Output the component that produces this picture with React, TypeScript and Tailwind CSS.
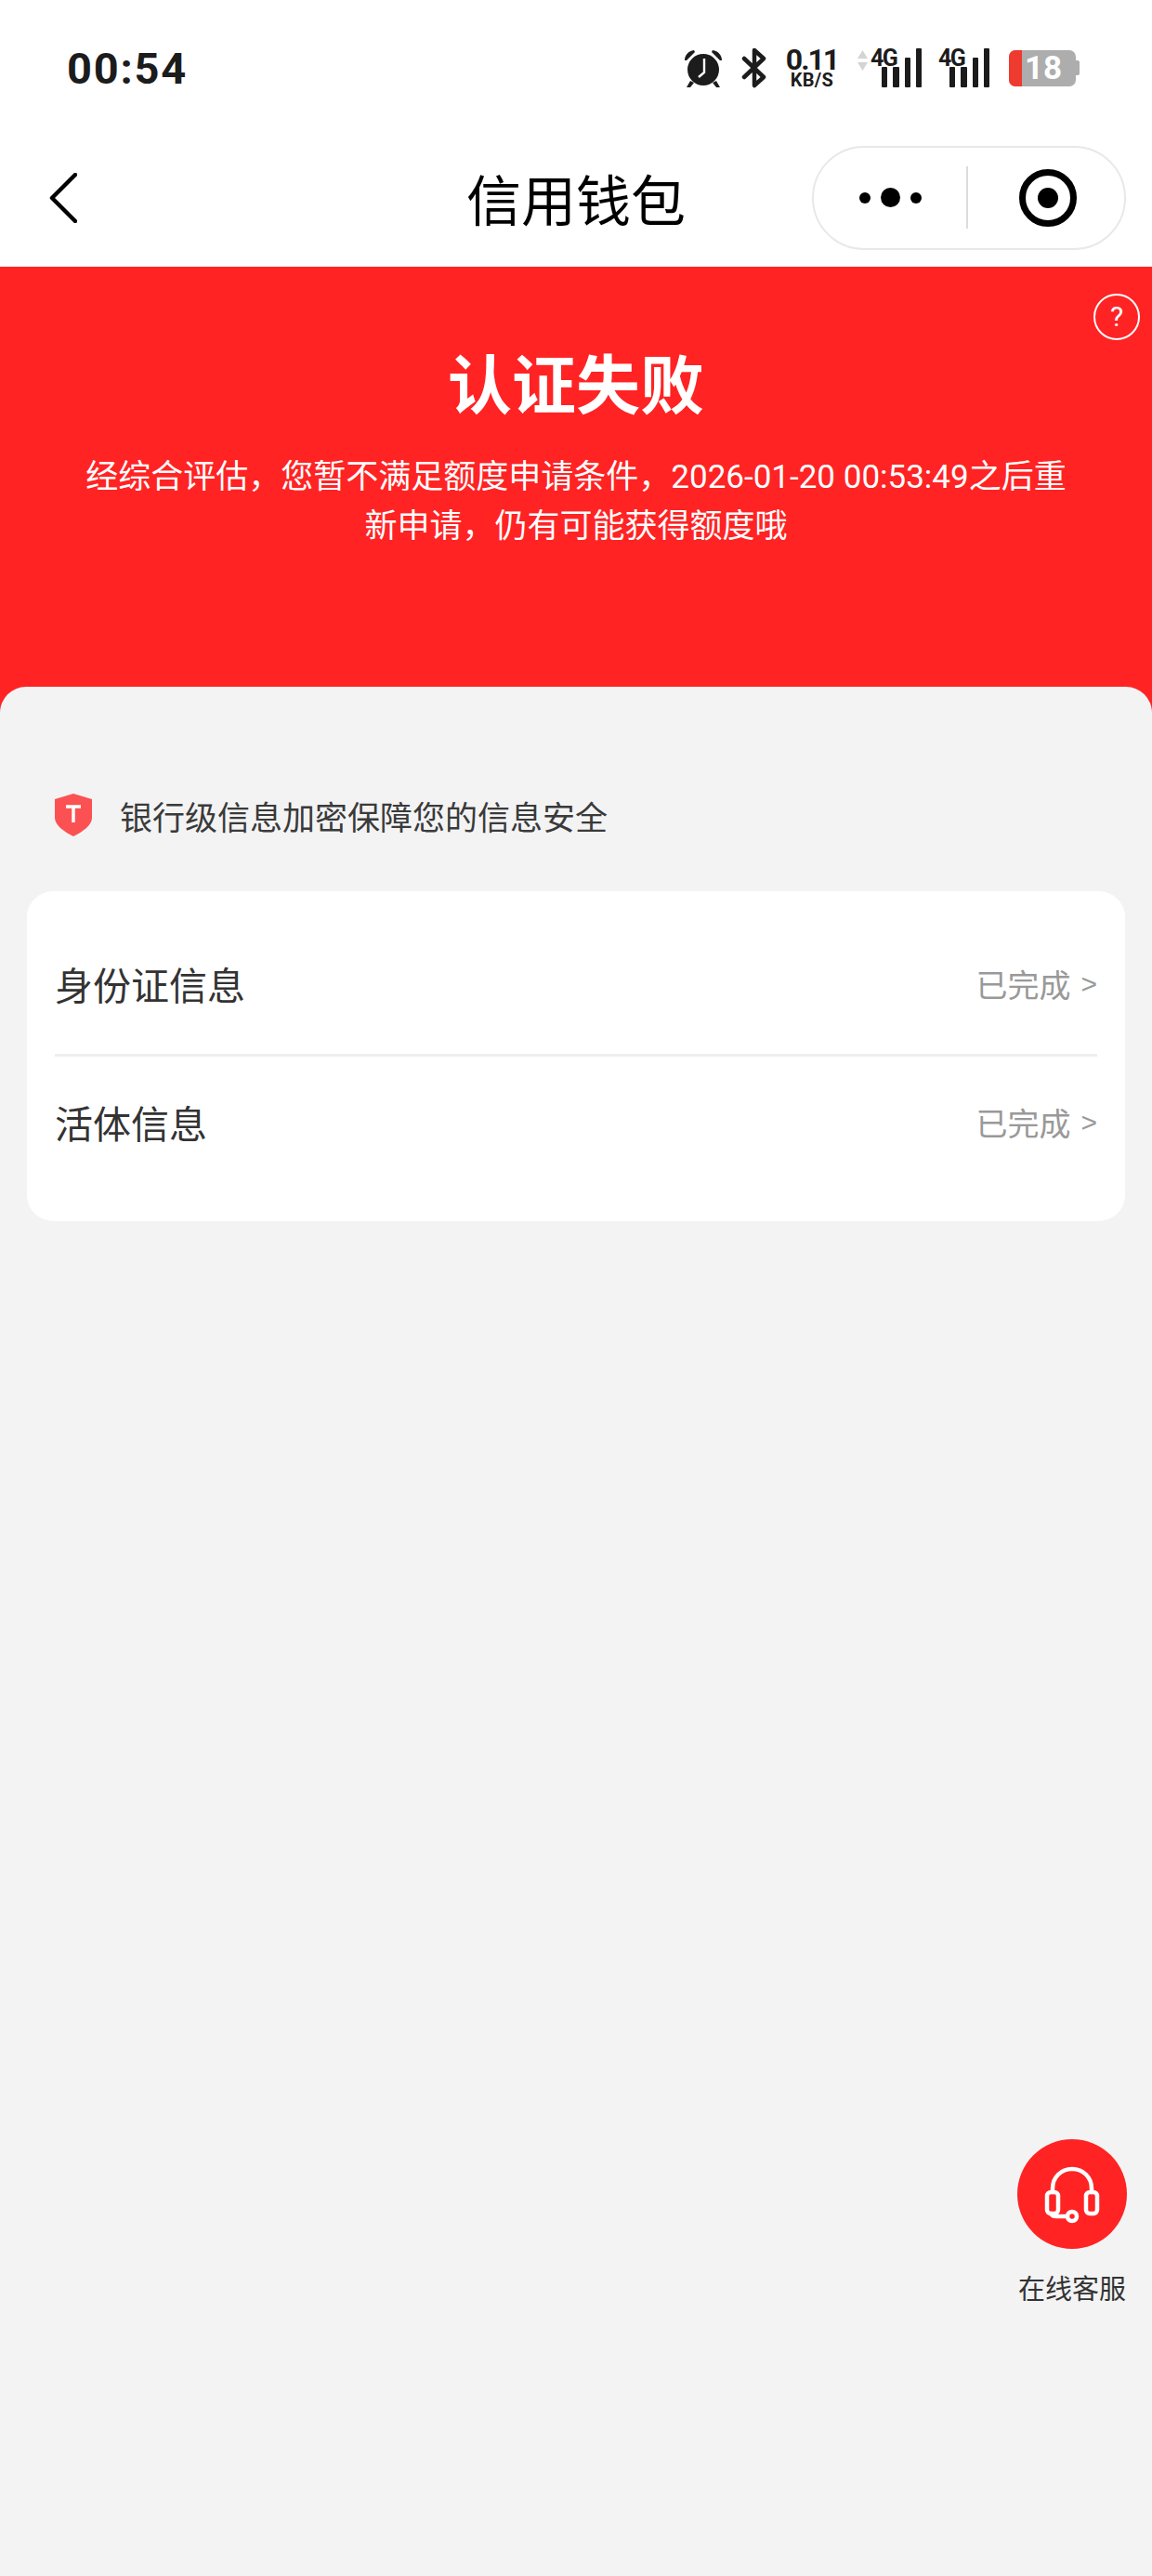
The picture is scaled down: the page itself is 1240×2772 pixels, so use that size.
const cjk = "font-['Noto_Sans_CJK_SC','Noto_Sans',sans-serif]";

function AlarmIcon() {
  return (
    <svg width="44" height="44" viewBox="0 0 44 44" fill="#1c1c1c">
      <circle cx="22" cy="24" r="17" />
      <path d="M2 14c0-6 4-10 10-11l1 2-9 9zM42 14c0-6-4-10-10-11l-1 2 9 9z" />
      <path d="M8 36l-4 7h4l4-5zM36 36l4 7h-4l-4-5z" />
      <path d="M23 12v15l-6 5" fill="none" stroke="#fff" strokeWidth="2.4" />
    </svg>
  );
}

function BluetoothIcon() {
  return (
    <svg width="28" height="44" viewBox="0 0 28 44" fill="none" stroke="#1c1c1c" strokeWidth="4.5">
      <path d="M3 12l21 20-10 9V3l10 9L3 32" strokeLinejoin="round" strokeLinecap="round" />
    </svg>
  );
}

function SignalBars() {
  return (
    <div className="flex items-end gap-[6px]">
      <div className="w-[6px] h-[22px] rounded-[1px] bg-[#1c1c1c]" />
      <div className="w-[7px] h-[22px] rounded-[1px] bg-[#1c1c1c]" />
      <div className="w-[6px] h-[32px] rounded-[1px] bg-[#1c1c1c]" />
      <div className="w-[6px] h-[42px] rounded-[1px] bg-[#1c1c1c]" />
    </div>
  );
}

function Signal({ arrows }: { arrows?: boolean }) {
  return (
    <div className="flex items-start h-[44px]">
      {arrows && (
        <svg width="11" height="24" viewBox="0 0 11 24" fill="#d4d4d4" className="mr-[3px] mt-[2px]">
          <path d="M5.5 1L11 10H0zM5.5 23L0 14h11z" />
        </svg>
      )}
      <span className="font-['Roboto',sans-serif] font-bold text-[25px] leading-[24px] tracking-[-1.5px] text-[#1c1c1c] w-[27px]">
        4G
      </span>
      <div className="-ml-[15px] mt-[1px]">
        <SignalBars />
      </div>
    </div>
  );
}

function Battery() {
  return (
    <div className="flex items-center">
      <div className="w-[72px] h-[39px] rounded-[7px] bg-[#adadad] flex">
        <div className="w-[14px] rounded-l-[7px] bg-[#ee3a2f]" />
        <span className="pl-[3px] font-['Roboto',sans-serif] font-bold text-[35px] leading-[39px] text-white">18</span>
      </div>
      <div className="w-[4px] h-[16px] rounded-r-[2px] bg-[#adadad]" />
    </div>
  );
}

function StatusBar() {
  return (
    <div className="h-[146px] flex items-center justify-between pl-[72px] pr-[78px]">
      <span className="font-['Roboto',sans-serif] font-bold text-[47px] leading-none tracking-[1.8px] text-[#1c1c1c]">00:54</span>
      <div className="flex items-center">
        <AlarmIcon />
        <div className="ml-[19px]">
          <BluetoothIcon />
        </div>
        <div className="ml-[21px] w-[54px] flex flex-col items-center font-['Roboto',sans-serif] font-bold text-[#1c1c1c]">
          <span className="text-[32px] leading-[27px] tracking-[-2px]">0.11</span>
          <span className="text-[20px] leading-[17px] tracking-[0.3px]">KB/S</span>
        </div>
        <div className="ml-[22px]">
          <Signal arrows />
        </div>
        <div className="ml-[18px]">
          <Signal />
        </div>
        <div className="ml-[21px]">
          <Battery />
        </div>
      </div>
    </div>
  );
}

function NavBar() {
  return (
    <div className="h-[141px] pb-[8px] grid grid-cols-[1fr_auto_1fr] items-center">
      <div className="pl-[53px]">
        <svg width="30" height="54" viewBox="0 0 30 54" fill="none" stroke="#000" strokeWidth="4.5">
          <path d="M28 2L3 27l25 25" strokeLinecap="round" strokeLinejoin="round" />
        </svg>
      </div>
      <h1 className={`${cjk} text-[59px] leading-none font-normal text-black`}>信用钱包</h1>
      <div className="flex justify-end pr-[28px]">
        <div className="w-[338px] h-[112px] rounded-full border-2 border-[#e8e8e8] bg-white flex items-center">
          <div className="w-[164px] flex items-center justify-center gap-[11px]">
            <div className="w-[12px] h-[12px] rounded-full bg-black" />
            <div className="w-[21px] h-[21px] rounded-full bg-black" />
            <div className="w-[12px] h-[12px] rounded-full bg-black" />
          </div>
          <div className="w-[2px] h-[67px] bg-[#dcdcdc]" />
          <div className="flex-1 flex items-center justify-center pl-[4px]">
            <div className="w-[62px] h-[62px] rounded-full border-[7px] border-black flex items-center justify-center">
              <div className="w-[22px] h-[22px] rounded-full bg-black" />
            </div>
          </div>
        </div>
      </div>
    </div>
  );
}

function Banner() {
  return (
    <div className="relative h-[480px] bg-[#ff2324] pt-[85px] text-center text-white">
      <div className="absolute top-[29px] right-[13px] w-[50px] h-[50px] rounded-full border-[2.5px] border-white flex items-center justify-center font-['Roboto',sans-serif] text-[30px] leading-none">
        ?
      </div>
      <h2 className={`${cjk} text-[69px] leading-[76px] font-bold`}>认证失败</h2>
      <p className="font-['Roboto','Noto_Sans_CJK_SC',sans-serif] mt-[39px] mx-auto w-[1070px] text-[35px] leading-[53px]">
        经综合评估，您暂不满足额度申请条件，2026-01-20 00:53:49之后重新申请，仍有可能获得额度哦
      </p>
    </div>
  );
}

function InfoRow({ label, className }: { label: string; className: string }) {
  return (
    <div className={`flex items-center justify-between ${className}`}>
      <span className={`${cjk} text-[41px] leading-none text-[#333]`}>{label}</span>
      <span className={`${cjk} flex items-center text-[34px] leading-none text-[#999]`}>
        已完成
        <span className="ml-[11px] font-['Liberation_Sans',sans-serif] text-[30px]">&gt;</span>
      </span>
    </div>
  );
}

function Headset() {
  return (
    <svg width="118" height="118" viewBox="0 0 118 118" fill="none" stroke="#fff" strokeWidth="4.5" strokeLinecap="round" strokeLinejoin="round">
      <path d="M38 57V53c0-12 9-21 21-21s21 9 21 21v4" />
      <rect x="32" y="57" width="12" height="23" rx="4" />
      <rect x="74" y="57" width="12" height="23" rx="4" />
      <path d="M36 80c1 2 3 3 6 3h12" />
      <circle cx="59" cy="83" r="5" />
    </svg>
  );
}

export default function App() {
  return (
    <div className="relative min-h-screen flex flex-col bg-white">
      <StatusBar />
      <NavBar />
      <Banner />

      {/* Main content */}
      <div className="flex-1 -mt-[28px] relative rounded-t-[28px] bg-[#f3f3f4] px-[29px] pt-[114px]">
        <div className="flex items-center h-[48px] pl-[30px]">
          <svg width="40" height="46" viewBox="0 0 40 46" className="shrink-0">
            <path d="M20 0l20 6v20c0 8-10 15-20 20C10 41 0 34 0 26V6z" fill="#fb5152" />
            <path d="M12 14h16M20 14v17" stroke="#fff" strokeWidth="3.5" fill="none" />
          </svg>
          <span className={`${cjk} ml-[30px] text-[35px] leading-none text-[#3a3a3a]`}>
            银行级信息加密保障您的信息安全
          </span>
        </div>

        <div className="mt-[58px] h-[355px] rounded-[28px] bg-white px-[30px] pt-[24px]">
          <InfoRow label="身份证信息" className="h-[151px]" />
          <div className="h-[3px] bg-[#eeeeee]" />
          <InfoRow label="活体信息" className="h-[141px]" />
        </div>
      </div>

      {/* Floating customer service */}
      <div className="absolute top-[2302px] right-[27px] flex flex-col items-center">
        <div className="w-[118px] h-[118px] rounded-full bg-[#ff2324]">
          <Headset />
        </div>
        <span className={`${cjk} mt-[23px] text-[29px] leading-[36px] whitespace-nowrap text-[#333]`}>在线客服</span>
      </div>
    </div>
  );
}
